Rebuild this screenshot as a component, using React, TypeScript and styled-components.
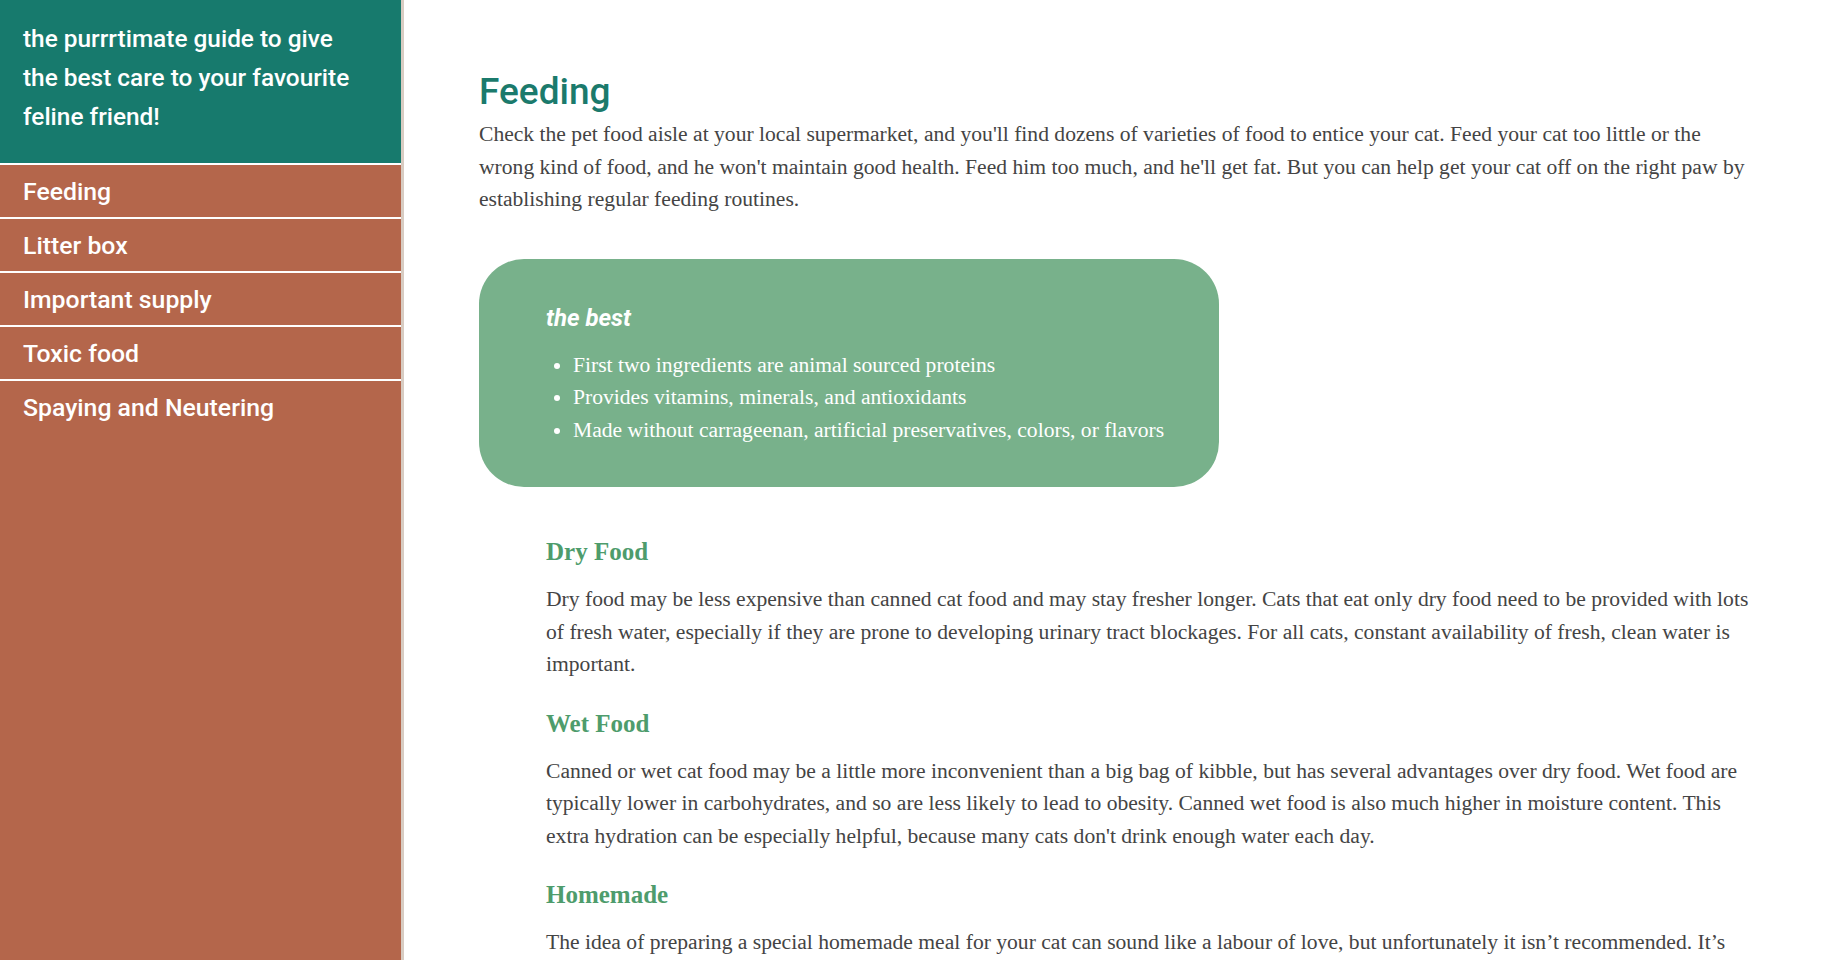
import React from 'react';
import styled, { createGlobalStyle } from 'styled-components';

const GlobalStyle = createGlobalStyle`
  html {
    scrollbar-width: none;
  }
  body {
    margin: 0;
    background: #ffffff;
    font-family: 'Liberation Serif', 'Times New Roman', serif;
  }
`;

const navItems = ['Feeding', 'Litter box', 'Important supply', 'Toxic food', 'Spaying and Neutering'];

const sections = [
  {
    title: 'Dry Food',
    text: 'Dry food may be less expensive than canned cat food and may stay fresher longer. Cats that eat only dry food need to be provided with lots of fresh water, especially if they are prone to developing urinary tract blockages. For all cats, constant availability of fresh, clean water is important.',
  },
  {
    title: 'Wet Food',
    text: "Canned or wet cat food may be a little more inconvenient than a big bag of kibble, but has several advantages over dry food. Wet food are typically lower in carbohydrates, and so are less likely to lead to obesity. Canned wet food is also much higher in moisture content. This extra hydration can be especially helpful, because many cats don't drink enough water each day.",
  },
  {
    title: 'Homemade',
    text: 'The idea of preparing a special homemade meal for your cat can sound like a labour of love, but unfortunately it isn’t recommended. It’s very difficult to get the balance of nutrients right, and an unbalanced diet can cause serious health problems over time.',
  },
];

const bestList = [
  'First two ingredients are animal sourced proteins',
  'Provides vitamins, minerals, and antioxidants',
  'Made without carrageenan, artificial preservatives, colors, or flavors',
];

export default function App() {
  return (
    <>
      <GlobalStyle />
      <Page>
        <Sidebar>
          <Tagline>the purrrtimate guide to give the best care to your favourite feline friend!</Tagline>
          <Nav>
            {navItems.map((item) => (
              <NavItem key={item} href="#">
                {item}
              </NavItem>
            ))}
          </Nav>
        </Sidebar>
        <Main>
          <Title>Feeding</Title>
          <Intro>
            Check the pet food aisle at your local supermarket, and you'll find dozens of varieties of food to entice
            your cat. Feed your cat too little or the wrong kind of food, and he won't maintain good health. Feed him too
            much, and he'll get fat. But you can help get your cat off on the right paw by establishing regular feeding
            routines.
          </Intro>
          <BestCard>
            <BestTitle>the best</BestTitle>
            <BestList>
              {bestList.map((line) => (
                <li key={line}>{line}</li>
              ))}
            </BestList>
          </BestCard>
          {sections.map((s) => (
            <Section key={s.title}>
              <SectionTitle>{s.title}</SectionTitle>
              <SectionText>{s.text}</SectionText>
            </Section>
          ))}
        </Main>
      </Page>
    </>
  );
}

const Page = styled.div`
  display: flex;
  flex-direction: row;
  min-height: 100vh;
`;

const Sidebar = styled.aside`
  position: sticky;
  top: 0;
  flex: 0 0 401px;
  height: 100vh;
  display: flex;
  flex-direction: column;
  background: #b4664b;
  border-right: 3px solid #d8ccc2;
  font-family: Roboto, 'Liberation Sans', sans-serif;
  font-weight: 500;
  color: #ffffff;
`;

const Tagline = styled.div`
  background: #177a6d;
  padding: 19px 40px 27px 23px;
  font-size: 24.4px;
  line-height: 39px;
`;

const Nav = styled.nav`
  display: flex;
  flex-direction: column;
`;

const NavItem = styled.a`
  display: flex;
  align-items: center;
  height: 52px;
  padding: 0 23px;
  border-top: 2px solid #ffffff;
  color: #ffffff;
  text-decoration: none;
  font-size: 24.8px;
`;

const Main = styled.main`
  flex: 1;
  min-width: 0;
  padding: 70px 72px 40px 75px;
  color: #444444;
`;

const Title = styled.h1`
  margin: 0;
  font-family: Roboto, 'Liberation Sans', sans-serif;
  font-weight: 500;
  font-size: 37px;
  line-height: 44px;
  color: #1b7a6c;
`;

const Intro = styled.p`
  margin: 4px 0 0;
  font-size: 21.6px;
  line-height: 32.5px;
`;

const BestCard = styled.div`
  width: 740px;
  box-sizing: border-box;
  margin: 43px 0 50px;
  padding: 46px 30px 41px 67px;
  border-radius: 45px;
  background: #78b18b;
  color: #ffffff;
`;

const BestTitle = styled.div`
  font-family: Roboto, 'Liberation Sans', sans-serif;
  font-weight: 700;
  font-style: italic;
  font-size: 24px;
  line-height: 26px;
`;

const BestList = styled.ul`
  margin: 18px 0 0;
  padding-left: 27px;
  font-size: 21.6px;
  line-height: 32.5px;
`;

const Section = styled.section`
  padding-left: 67px;
`;

const SectionTitle = styled.h3`
  margin: 28px 0 0;
  font-size: 25px;
  line-height: 30px;
  font-weight: 700;
  color: #4e9c6c;
`;

const SectionText = styled.p`
  margin: 16px 0 0;
  font-size: 21.6px;
  line-height: 32.5px;
`;
